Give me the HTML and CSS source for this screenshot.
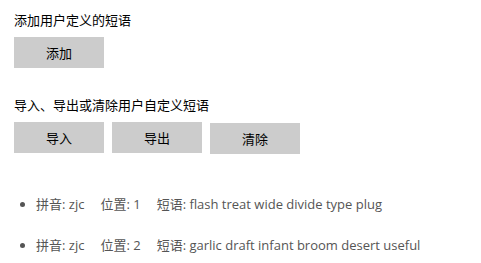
FILE: index.html
```html
<!DOCTYPE html>
<html lang="zh-CN">
<head>
    <meta charset="UTF-8">
    <title>用户自定义短语</title>
    <link rel="stylesheet" href="styles.css">
</head>
<body>

    <div class="section">
        <div class="title">添加用户定义的短语</div>
        <div class="buttons">
            <button>添加</button>
        </div>
    </div>

    <div class="section">
        <div class="title">导入、导出或清除用户自定义短语</div>
        <div class="buttons">
            <button>导入</button>
            <button>导出</button>
            <button class="clear">清除</button>
        </div>
    </div>

    <ul class="phrases">
        <li><span>拼音: zjc</span><span>位置: 1</span><span>短语: flash treat wide divide type plug</span></li>
        <li><span>拼音: zjc</span><span>位置: 2</span><span>短语: garlic draft infant broom desert useful</span></li>
    </ul>

</body>
</html>
```

FILE: styles.css
```css
body {
    margin: 0;
    padding: 11px 14px 0;
    font-family: "Open Sans", "Noto Sans CJK SC", sans-serif;
    font-size: 13px;
    color: #000;
    background: #fff;
}
.section {
    margin-bottom: 28px;
}
.title {
    line-height: 18px;
    margin-bottom: 8px;
}
.buttons {
    display: flex;
    gap: 8px;
}
button {
    width: 90px;
    height: 31px;
    border: none;
    background-color: #cccccc;
    font-family: inherit;
    font-size: 13px;
    color: #000;
    padding: 0;
}
button.clear {
    margin-top: 1px;
}
.phrases {
    margin: 41px 0 0;
    padding-left: 22px;
    color: #555;
}
.phrases li {
    line-height: 18px;
    margin-bottom: 23px;
}
.phrases li:last-child {
    margin-bottom: 0;
}
.phrases span {
    margin-right: 16px;
}
```
